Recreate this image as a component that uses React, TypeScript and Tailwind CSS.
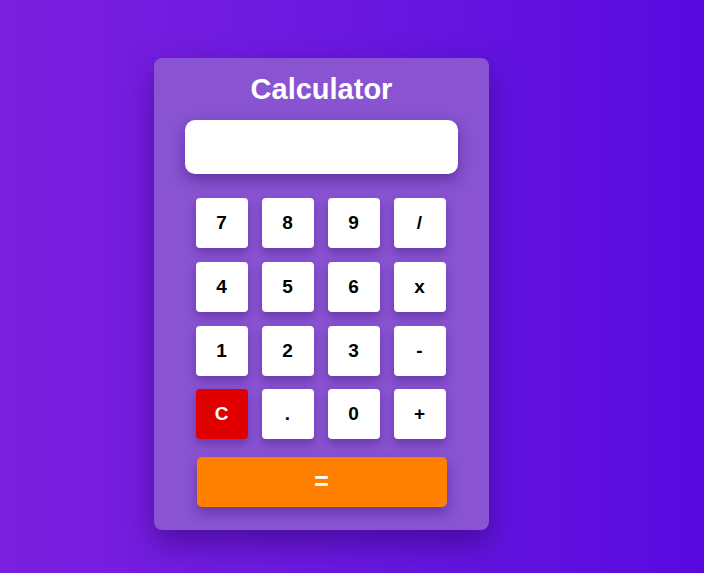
import React from "react";

const keys: string[][] = [
  ["7", "8", "9", "/"],
  ["4", "5", "6", "x"],
  ["1", "2", "3", "-"],
  ["C", ".", "0", "+"],
];

export default function App() {
  return (
    <div
      className="min-h-[573px] w-full bg-gradient-to-r from-[#7c1fdf] to-[#5808df] pl-[154px] pt-[58px]"
      style={{ fontFamily: '"Liberation Sans", Arial, sans-serif' }}
    >
      {/* Card */}
      <div className="w-[335px] rounded-lg bg-[#8953d1] pt-[14px] pb-[23px] shadow-[0_14px_30px_rgba(40,0,100,0.5)] flex flex-col items-center">
        <h1 className="h-[34px] leading-[34px] text-[29px] font-bold text-white">Calculator</h1>

        {/* Display */}
        <div className="mt-[14px] h-[54px] w-[273px] rounded-[10px] bg-white shadow-[0_6px_14px_rgba(50,10,110,0.45)]" />

        {/* Keys */}
        <div className="mt-[24px] mr-[2px] grid grid-cols-[repeat(4,52px)] gap-x-[14px] gap-y-[14px]">
          {keys.flat().map((k, i) => (
            <button
              key={k}
              className={`h-[50px] w-[52px] rounded-[4px] text-[19px] font-bold shadow-[0_5px_10px_rgba(50,10,110,0.35)] ${
                k === "C" ? "bg-[#e00000] text-white" : "bg-white text-black"
              } ${i >= 12 ? "-mt-[1px]" : ""}`}
            >
              {k}
            </button>
          ))}
        </div>

        <button className="mt-[18px] h-[50px] w-[250px] rounded-[5px] bg-[#ff7f00] text-[25px] font-bold text-white shadow-[0_6px_12px_rgba(50,10,110,0.4)]">
          =
        </button>
      </div>
    </div>
  );
}
